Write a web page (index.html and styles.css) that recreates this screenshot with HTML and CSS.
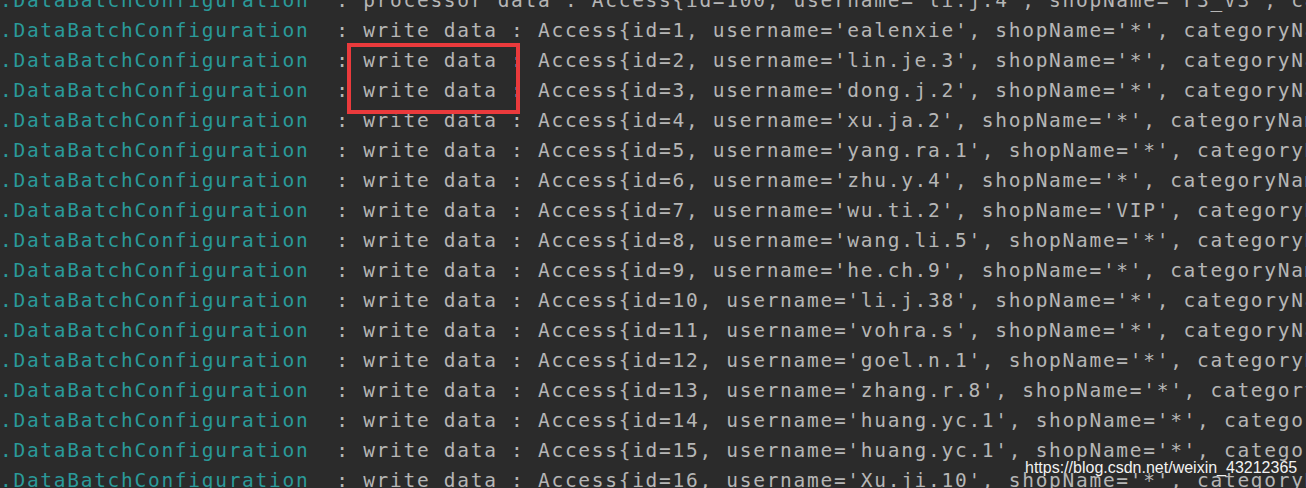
FILE: index.html
```html
<!DOCTYPE html>
<html lang="en">
<head>
<meta charset="utf-8">
<title>Console log</title>
<link rel="stylesheet" href="styles.css">
</head>
<body>
<div class="console">
  <div class="log">
    <div class="line"><span class="logger">.DataBatchConfiguration</span><span class="msg">  : processor data : Access{id=100, username='li.j.4', shopName='F3_V3', categoryName='all', status=1}</span></div>
    <div class="line"><span class="logger">.DataBatchConfiguration</span><span class="msg">  : write data : Access{id=1, username='ealenxie', shopName='*', categoryName='*', status=1}</span></div>
    <div class="line"><span class="logger">.DataBatchConfiguration</span><span class="msg">  : write data : Access{id=2, username='lin.je.3', shopName='*', categoryName='*', status=1}</span></div>
    <div class="line"><span class="logger">.DataBatchConfiguration</span><span class="msg">  : write data : Access{id=3, username='dong.j.2', shopName='*', categoryName='*', status=1}</span></div>
    <div class="line"><span class="logger">.DataBatchConfiguration</span><span class="msg">  : write data : Access{id=4, username='xu.ja.2', shopName='*', categoryName='*', status=1}</span></div>
    <div class="line"><span class="logger">.DataBatchConfiguration</span><span class="msg">  : write data : Access{id=5, username='yang.ra.1', shopName='*', categoryName='*', status=1}</span></div>
    <div class="line"><span class="logger">.DataBatchConfiguration</span><span class="msg">  : write data : Access{id=6, username='zhu.y.4', shopName='*', categoryName='*', status=1}</span></div>
    <div class="line"><span class="logger">.DataBatchConfiguration</span><span class="msg">  : write data : Access{id=7, username='wu.ti.2', shopName='VIP', categoryName='*', status=1}</span></div>
    <div class="line"><span class="logger">.DataBatchConfiguration</span><span class="msg">  : write data : Access{id=8, username='wang.li.5', shopName='*', categoryName='*', status=1}</span></div>
    <div class="line"><span class="logger">.DataBatchConfiguration</span><span class="msg">  : write data : Access{id=9, username='he.ch.9', shopName='*', categoryName='*', status=1}</span></div>
    <div class="line"><span class="logger">.DataBatchConfiguration</span><span class="msg">  : write data : Access{id=10, username='li.j.38', shopName='*', categoryName='*', status=1}</span></div>
    <div class="line"><span class="logger">.DataBatchConfiguration</span><span class="msg">  : write data : Access{id=11, username='vohra.s', shopName='*', categoryName='*', status=1}</span></div>
    <div class="line"><span class="logger">.DataBatchConfiguration</span><span class="msg">  : write data : Access{id=12, username='goel.n.1', shopName='*', categoryName='*', status=1}</span></div>
    <div class="line"><span class="logger">.DataBatchConfiguration</span><span class="msg">  : write data : Access{id=13, username='zhang.r.8', shopName='*', categoryName='*', status=1}</span></div>
    <div class="line"><span class="logger">.DataBatchConfiguration</span><span class="msg">  : write data : Access{id=14, username='huang.yc.1', shopName='*', categoryName='*', status=1}</span></div>
    <div class="line"><span class="logger">.DataBatchConfiguration</span><span class="msg">  : write data : Access{id=15, username='huang.yc.1', shopName='*', categoryName='*', status=1}</span></div>
    <div class="line"><span class="logger">.DataBatchConfiguration</span><span class="msg">  : write data : Access{id=16, username='Xu.ji.10', shopName='*', categoryName='*', status=1}</span></div>
  </div>
  <div class="highlight"></div>
  <div class="watermark">https://blog.csdn.net/weixin_43212365</div>
</div>
</body>
</html>
```

FILE: styles.css
```css
html, body {
  margin: 0;
  padding: 0;
  background: #2b2b2b;
}

body {
  width: 1306px;
  height: 488px;
  overflow: hidden;
}

.console {
  position: relative;
  width: 1306px;
  height: 488px;
  overflow: hidden;
  background: #2b2b2b;
}

.log {
  margin-top: -14px;
  font-family: "DejaVu Sans Mono", "Liberation Mono", monospace;
  font-size: 19.5px;
  letter-spacing: 1.71px;
  line-height: 30px;
}

.line {
  white-space: pre;
  height: 30px;
}

.logger {
  color: #2a9a9a;
}

.msg {
  color: #b6b6b6;
}

.highlight {
  position: absolute;
  left: 347px;
  top: 43px;
  width: 173px;
  height: 71px;
  box-sizing: border-box;
  border: 4px solid #ea3a3c;
}

.watermark {
  position: absolute;
  left: 1025px;
  top: 459px;
  font-family: "Liberation Sans", Arial, sans-serif;
  font-size: 16px;
  line-height: 18px;
  color: #f2f2f2;
  white-space: nowrap;
}
```
